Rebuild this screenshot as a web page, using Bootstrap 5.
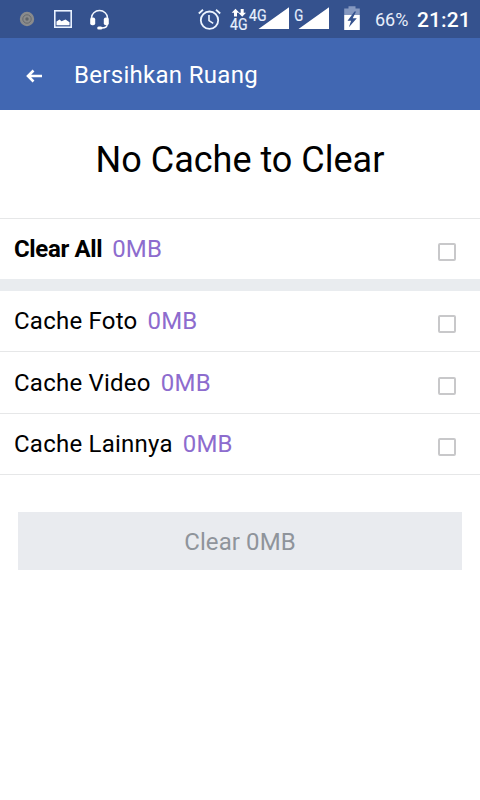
<!DOCTYPE html>
<html lang="id">
<head>
<meta charset="utf-8">
<meta name="viewport" content="width=device-width, initial-scale=1">
<title>Bersihkan Ruang</title>
<link href="https://cdn.jsdelivr.net/npm/bootstrap@5.3.0/dist/css/bootstrap.min.css" rel="stylesheet">
<style>
body { font-family: Roboto, "Liberation Sans", sans-serif; font-size: 24px; line-height: 28px; color: #000; background: #fff; }
.status-bar { height: 38px; background: #35528e; color: #fff; }
.status-bar svg { flex: none; display: block; }
.battery-level { font-size: 18px; letter-spacing: 0; width: 42px; color: #e8eefa; padding-top: 2px; }
.clock { font-size: 21px; font-weight: 500; width: 63px; letter-spacing: .1px; padding-top: 2px; }
.app-bar { height: 72px; background: #4167b2; color: #fff; }
.app-title { font-size: 24px; letter-spacing: .3px; padding-top: 2px; }
.headline { font-size: 36px; line-height: 42px; height: 108px; padding-top: 29px; letter-spacing: 0; font-weight: 400; }
.cache-row { height: 62px; padding: 0 24px 0 14px; border: 0; border-bottom: 1px solid #e6e7e8; color: #000; letter-spacing: .23px; }
.cache-row.all { height: 73px; border-top: 1px solid #e6e7e8; border-bottom: 12px solid #e9ecef; }
.cache-row.first, .cache-row.last { height: 61px; }
.cache-row.last { padding-bottom: 1px; }
.cache-row .fw-bold { letter-spacing: -.37px; }
.cache-row .size { color: #8d6cce; margin-left: 10px; }
.cache-row .form-check-input { width: 18px; height: 18px; margin: 6px 0 0; border: 2px solid #c8c8ca; border-radius: 2px; flex: none; }
.clear-btn { height: 58px; margin: 37px 18px 0; padding: 8px 12px 6px; border: 0; border-radius: 0; font-size: 24px; line-height: 28px; letter-spacing: .1px; }
.clear-btn:disabled { background: #e9ebef; color: #8f949b; opacity: 1; }
</style>
<script src="https://cdn.jsdelivr.net/npm/bootstrap@5.3.0/dist/js/bootstrap.bundle.min.js"></script>
</head>
<body>
<header>
  <div class="status-bar d-flex align-items-center">
    <svg width="120" height="38" viewBox="0 0 120 38" fill="none" aria-hidden="true">
      <circle cx="27" cy="19" r="7.2" fill="#8a8b8c"/>
      <circle cx="27" cy="19" r="4.2" stroke="#66696d"/>
      <circle cx="27" cy="19" r="1.7" fill="#606469"/>
      <rect x="54.8" y="10.8" width="16.4" height="16.4" stroke="#e9f2ff" stroke-width="1.6"/>
      <path d="M56.5 25.2v-3.7l3-2 2 1.7 4-1.7 4 2.7v3z" fill="#fff"/>
      <path d="M91.5 19v-1.2a8 7.2 0 0 1 16 0V19" stroke="#f2f7ff" stroke-width="1.5"/>
      <rect x="90.2" y="17.5" width="5" height="7.8" rx="2" fill="#fff"/>
      <rect x="103.8" y="17.5" width="5" height="7.8" rx="2" fill="#fff"/>
      <path d="M107.2 24.5c0 2.2-2.3 3.5-5.5 3.5" stroke="#fff" stroke-width="1.4"/>
      <rect x="97.2" y="26.6" width="5.2" height="3" rx="1.5" fill="#fff"/>
    </svg>
    <svg class="ms-auto" width="185" height="38" viewBox="190 0 185 38" fill="none" aria-label="4G, G">
      <circle cx="209.5" cy="20.2" r="8.7" stroke="#edf5ff" stroke-width="1.8"/>
      <path d="M209 15v5.6l4.2 2.8" stroke="#edf5ff" stroke-width="1.6"/>
      <path d="M198.8 13.5l4.2-3.7M220.2 13.5l-4.2-3.7" stroke="#edf5ff" stroke-width="1.8"/>
      <path d="M235.5 8.7l3.8 4h-2.3v3.8h-3v-3.8h-2.3zM242.2 16.8l-3.8-4h2.3V9h3v3.8h2.3z" fill="#fff"/>
      <g fill="#e8f1ff" stroke="#e8f1ff" stroke-width=".2" font-family="Roboto, sans-serif" font-size="16">
        <text x="230" y="30.4" textLength="17.5" lengthAdjust="spacingAndGlyphs">4G</text>
        <text x="249" y="20.6" textLength="17.5" lengthAdjust="spacingAndGlyphs">4G</text>
        <text x="294.3" y="20.6" textLength="9" lengthAdjust="spacingAndGlyphs">G</text>
      </g>
      <path d="M258.5 29L289 7.2V29zM298.5 29L329 7.2V29z" fill="#fff"/>
      <path d="M348.5 6.2h7v2.3h4.3V15h-15.6V8.5h4.3z" fill="#8598c0"/>
      <path d="M344.2 15h15.6v15h-15.6z" fill="#fff"/>
      <path d="M354.5 11.5l-7 9.2h3.6l-2.2 6.6 7.9-9.1h-4.1l3.4-6.7z" fill="#35528e"/>
    </svg>
    <span class="battery-level text-nowrap">66%</span>
    <span class="clock text-nowrap">21:21</span>
  </div>
  <nav class="app-bar d-flex align-items-center" aria-label="Bersihkan Ruang">
    <svg class="flex-shrink-0" width="74" height="72" viewBox="0 38 74 72" fill="none" aria-hidden="true">
      <path d="M42 76H28M33.5 70.5L28 76l5.5 5.5" stroke="#fff" stroke-width="2.6"/>
    </svg>
    <span class="app-title">Bersihkan Ruang</span>
  </nav>
</header>
<main>
  <h1 class="headline text-center mb-0">No Cache to Clear</h1>
  <div class="list-group rounded-0">
    <label class="cache-row all list-group-item d-flex align-items-center">
      <span class="fw-bold">Clear All</span><span class="size">0MB</span>
      <input class="form-check-input ms-auto" type="checkbox">
    </label>
    <label class="cache-row first list-group-item d-flex align-items-center">
      <span>Cache Foto</span><span class="size">0MB</span>
      <input class="form-check-input ms-auto" type="checkbox">
    </label>
    <label class="cache-row list-group-item d-flex align-items-center">
      <span>Cache Video</span><span class="size">0MB</span>
      <input class="form-check-input ms-auto" type="checkbox">
    </label>
    <label class="cache-row last list-group-item d-flex align-items-center">
      <span>Cache Lainnya</span><span class="size">0MB</span>
      <input class="form-check-input ms-auto" type="checkbox">
    </label>
  </div>
  <div class="d-grid">
    <button class="clear-btn btn" type="button" disabled>Clear 0MB</button>
  </div>
</main>
</body>
</html>
